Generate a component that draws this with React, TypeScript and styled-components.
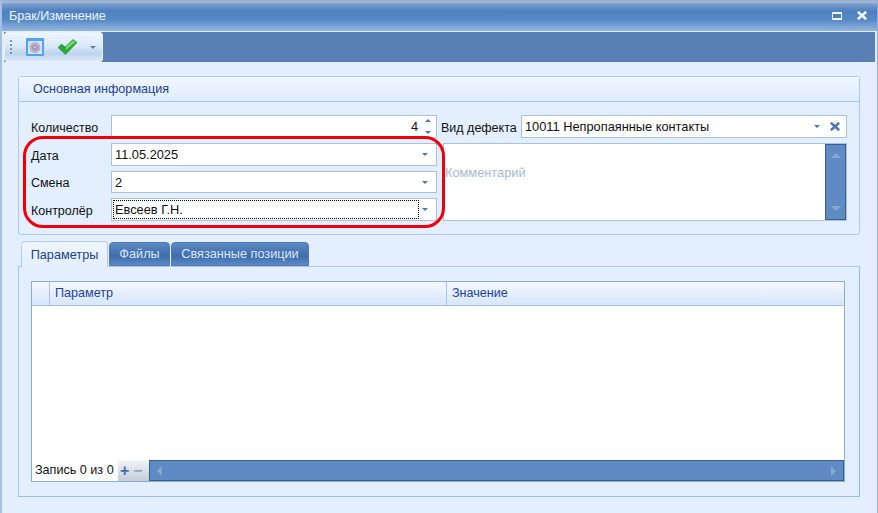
import React, { FunctionComponent } from "react";
import styled, { createGlobalStyle } from "styled-components";

const GlobalStyle = createGlobalStyle`
  html, body {
    margin: 0;
    padding: 0;
    background: #e3eeff;
  }
  * {
    box-sizing: border-box;
  }
`;

const Window = styled.div`
  width: 878px;
  height: 513px;
  display: flex;
  flex-direction: column;
  overflow: hidden;
  background: #e3eeff;
  border-left: 2px solid #a3c0e8;
  border-right: 1px solid #8fb0de;
  font-family: "Liberation Sans", Arial, sans-serif;
  font-size: 12px;
  position: relative;
`;

const TitleBar = styled.div`
  height: 31px;
  margin-left: -2px;
  margin-right: -1px;
  flex: none;
  display: flex;
  align-items: center;
  padding: 0 11px 0 9px;
  color: #eef4fc;
  font-size: 12.6px;
  background: linear-gradient(
    #8ea8c9 0,
    #a9bdd8 2px,
    #7a9dcc 4px,
    #4e80c1 11px,
    #568ac6 20px,
    #8fb2df 30px
  );
`;

const TitleText = styled.div`
  flex: 1;
`;

const TitleButtons = styled.div`
  display: flex;
  align-items: center;
  gap: 15px;
`;

const ToolbarBand = styled.div`
  height: 30px;
  margin: 1px 2px 0 2px;
  flex: none;
  background: #5880b4;
`;

const ToolStrip = styled.div`
  width: 99px;
  height: 30px;
  display: flex;
  align-items: center;
  border-radius: 3px;
  border: 1px solid #e8f1fc;
  background: linear-gradient(#eef5fe 0, #dce9f9 45%, #bcd3ef 75%, #dce9f9 100%);
`;

const Grip = styled.div`
  width: 2px;
  height: 15px;
  margin-left: 5px;
  background: repeating-linear-gradient(#7d97bb 0, #7d97bb 2px, transparent 2px, transparent 4px);
`;

const ToolIcon = styled.div<{ $gap: number }>`
  display: flex;
  margin-left: ${(p) => p.$gap}px;
`;

const OverflowArrow = styled.div`
  margin-left: 13px;
  width: 0;
  height: 0;
  border-left: 3px solid transparent;
  border-right: 3px solid transparent;
  border-top: 3px solid #5d7fae;
`;

const Content = styled.div`
  flex: 1;
  display: flex;
  flex-direction: column;
  padding: 14px 17px 16px 16px;
`;

const GroupPanel = styled.section`
  height: 159px;
  flex: none;
  border: 1px solid #adc8ec;
  border-radius: 3px;
  display: flex;
  flex-direction: column;
`;

const GroupHeader = styled.div`
  height: 25px;
  flex: none;
  display: flex;
  align-items: center;
  padding-left: 14px;
  color: #1f3f8c;
  font-size: 12.6px;
  border-bottom: 1px solid #a9c6ec;
  background: linear-gradient(#f0f6ff, #dfecfd);
`;

const FormGrid = styled.div`
  display: grid;
  grid-template-columns: 80px 326px 6px 78px 326px;
  grid-template-rows: 23px 23px 22px 23px;
  row-gap: 5px;
  padding: 13px 0 0 12px;
`;

const Label = styled.label`
  grid-column: 1;
  display: flex;
  align-items: center;
  padding-top: 2px;
  color: #111;
  font-size: 12.5px;
`;

const SideLabel = styled(Label)`
  grid-column: 4;
  margin-left: -2px;
`;

const Field = styled.div`
  display: flex;
  align-items: center;
  background: #fff;
  border: 1px solid #a8c2e4;
  padding: 0 3px;
  color: #111;
  font-size: 12.8px;
  position: relative;
`;

const FieldValue = styled.div<{ $right?: boolean; $focus?: boolean }>`
  flex: 1;
  height: 100%;
  display: flex;
  align-items: center;
  justify-content: ${(p) => (p.$right ? "flex-end" : "flex-start")};
  padding-right: ${(p) => (p.$right ? "15px" : "0")};
  ${(p) => (p.$focus ? "outline: 1px dotted #000; outline-offset: -2px; margin: 0 2px 0 -3px; padding-left: 3px;" : "")}
`;

const ComboArrow = styled.div`
  width: 0;
  height: 0;
  margin-right: 5px;
  border-left: 3px solid transparent;
  border-right: 3px solid transparent;
  border-top: 3px solid #4a77b3;
`;

const ClearButton = styled.div`
  display: flex;
  margin: 0 3px 0 5px;
`;

const SpinColumn = styled.div`
  position: absolute;
  right: 5px;
  top: 3px;
  bottom: 3px;
  display: flex;
  flex-direction: column;
  justify-content: space-between;
`;

const SpinUp = styled.div`
  width: 0;
  height: 0;
  border-left: 3px solid transparent;
  border-right: 3px solid transparent;
  border-bottom: 3px solid #4a77b3;
`;

const SpinDown = styled.div`
  width: 0;
  height: 0;
  border-left: 3px solid transparent;
  border-right: 3px solid transparent;
  border-top: 3px solid #4a77b3;
`;

const CommentBox = styled.div`
  grid-column: 4 / 6;
  grid-row: 2 / 5;
  display: flex;
  background: #fff;
  border: 1px solid #a8c2e4;
`;

const CommentText = styled.div`
  flex: 1;
  padding: 21px 0 0 1px;
  color: #a8b9cd;
  font-size: 12.8px;
`;

const VScroll = styled.div`
  width: 21px;
  display: flex;
  flex-direction: column;
  align-items: center;
  justify-content: space-between;
  padding: 8px 0;
  background: #5f8ac4;
  border: 1px solid #38608f;
`;

const ArrowUp = styled.div`
  width: 0;
  height: 0;
  border-left: 5px solid transparent;
  border-right: 5px solid transparent;
  border-bottom: 5px solid #86a8d4;
`;

const ArrowDown = styled.div`
  width: 0;
  height: 0;
  border-left: 5px solid transparent;
  border-right: 5px solid transparent;
  border-top: 5px solid #86a8d4;
`;

const ArrowLeft = styled.div`
  width: 0;
  height: 0;
  border-top: 5px solid transparent;
  border-bottom: 5px solid transparent;
  border-right: 5px solid #86a8d4;
`;

const ArrowRight = styled.div`
  width: 0;
  height: 0;
  border-top: 5px solid transparent;
  border-bottom: 5px solid transparent;
  border-left: 5px solid #86a8d4;
`;

const Highlight = styled.div`
  position: absolute;
  left: 21px;
  top: 136px;
  width: 422px;
  height: 92px;
  border: 3px solid #f00008;
  border-radius: 20px;
  pointer-events: none;
`;

const TabRow = styled.div`
  height: 26px;
  margin-top: 5px;
  padding-left: 3px;
  flex: none;
  display: flex;
  align-items: flex-end;
  gap: 1px;
  position: relative;
  z-index: 1;
`;

const Tab = styled.div<{ $active?: boolean; $width: number }>`
  width: ${(p) => p.$width}px;
  height: ${(p) => (p.$active ? "26px" : "24px")};
  margin-bottom: ${(p) => (p.$active ? "-1px" : "0")};
  display: flex;
  align-items: center;
  justify-content: center;
  font-size: 12.7px;
  border-radius: 4px 4px 0 0;
  border: 1px solid ${(p) => (p.$active ? "#b3cdef" : "#4f79b2")};
  border-bottom: ${(p) => (p.$active ? "none" : "1px solid #4f79b2")};
  color: ${(p) => (p.$active ? "#1f3f8c" : "#dbe7f7")};
  background: ${(p) =>
    p.$active
      ? "linear-gradient(#eff6ff, #e3eeff)"
      : "linear-gradient(#5b89c4, #3f6cab 60%, #5c8ac6)"};
`;

const TabPanel = styled.div`
  flex: 1;
  display: flex;
  border: 1px solid #a9c6ec;
  border-right-color: #9dbbe2;
  border-bottom-color: #9dbbe2;
  padding: 14px 14px 14px 12px;
`;

const DataGrid = styled.div`
  flex: 1;
  display: flex;
  flex-direction: column;
  background: #fff;
  border: 1px solid #8eabd2;
`;

const GridHeader = styled.div`
  height: 24px;
  flex: none;
  display: grid;
  grid-template-columns: 18px 397px 1fr;
  border-bottom: 1px solid #a3bfe3;
  background: linear-gradient(#f3f8ff, #d7e6fa);
`;

const HeaderCell = styled.div`
  display: flex;
  align-items: center;
  padding: 0 0 2px 5px;
  color: #1f3f9c;
  font-size: 12.6px;
  border-right: 1px solid #a9c3e6;
  &:last-child {
    border-right: none;
  }
`;

const GridBody = styled.div`
  flex: 1;
`;

const GridFooter = styled.div`
  height: 21px;
  flex: none;
  display: flex;
  align-items: stretch;
`;

const RecordInfo = styled.div`
  width: 86px;
  padding: 3px 0 0 3px;
  color: #111;
  font-size: 12.6px;
  white-space: nowrap;
`;

const PagerButtons = styled.div`
  width: 31px;
  display: flex;
  align-items: center;
  gap: 4px;
  padding-left: 2px;
  background: linear-gradient(#f3f5f8, #c3cbd6);
`;

const PagerSign = styled.span<{ $color: string }>`
  font-family: "Liberation Sans", Arial, sans-serif;
  font-size: 16px;
  font-weight: bold;
  line-height: 16px;
  width: 9px;
  text-align: center;
  color: ${(p) => p.$color};
`;

const HScroll = styled.div`
  flex: 1;
  display: flex;
  align-items: center;
  justify-content: space-between;
  padding: 0 7px;
  background: #5f8ac4;
  border: 1px solid #38608f;
`;

const RestoreIcon = () => (
  <svg width="10" height="8" viewBox="0 0 10 8">
    <rect x="0.5" y="0.5" width="9" height="7" fill="#4f7fbd" stroke="#f4f8fd" />
    <rect x="0" y="0" width="10" height="2" fill="#f4f8fd" />
    <rect x="0" y="6" width="10" height="2" fill="#f4f8fd" />
  </svg>
);

const CloseIcon: FunctionComponent<{ color: string }> = ({ color }) => (
  <svg width="10" height="9" viewBox="0 0 10 9">
    <path d="M0.8 0.8 L9.2 8.2 M9.2 0.8 L0.8 8.2" stroke={color} strokeWidth="2.6" fill="none" />
  </svg>
);

const WindowGearIcon = () => (
  <svg width="18" height="18" viewBox="0 0 18 18">
    <rect x="0" y="0" width="18" height="18" rx="1" fill="#4da6f5" />
    <rect x="2" y="3" width="14" height="13" fill="#d9e2ee" />
    <circle cx="9" cy="9.5" r="5.4" fill="#b4b2c8" />
    <circle cx="9" cy="9.5" r="2.8" fill="#a48fbf" />
    <circle cx="9" cy="9.5" r="1.1" fill="#dcd6e8" />
  </svg>
);

const CheckIcon = () => (
  <svg width="19" height="16" viewBox="0 0 19 16">
    <path d="M0 8.5 L3.5 5 L7 8 L15 0.5 L19 3.5 L7.5 15.5 Z" fill="#2aa83a" stroke="#1f8f30" strokeWidth="0.6" />
    <path d="M8 7.5 L15.2 1.2 L17.4 3 L8 11 Z" fill="#6fdc6a" />
  </svg>
);

const App: FunctionComponent<{}> = () => {
  return (
    <Window>
      <GlobalStyle />
      <TitleBar>
        <TitleText>Брак/Изменение</TitleText>
        <TitleButtons>
          <RestoreIcon />
          <CloseIcon color="#f4f8fd" />
        </TitleButtons>
      </TitleBar>

      <ToolbarBand>
        <ToolStrip>
          <Grip />
          <ToolIcon $gap={14}>
            <WindowGearIcon />
          </ToolIcon>
          <ToolIcon $gap={14}>
            <CheckIcon />
          </ToolIcon>
          <OverflowArrow />
        </ToolStrip>
      </ToolbarBand>

      <Content>
        <GroupPanel>
          <GroupHeader>Основная информация</GroupHeader>
          <FormGrid>
            <Label>Количество</Label>
            <Field>
              <FieldValue $right>4</FieldValue>
              <SpinColumn>
                <SpinUp />
                <SpinDown />
              </SpinColumn>
            </Field>
            <SideLabel>Вид дефекта</SideLabel>
            <Field>
              <FieldValue>10011 Непропаянные контакты</FieldValue>
              <ComboArrow />
              <ClearButton>
                <CloseIcon color="#4a77b3" />
              </ClearButton>
            </Field>

            <Label>Дата</Label>
            <Field>
              <FieldValue>11.05.2025</FieldValue>
              <ComboArrow />
            </Field>
            <CommentBox>
              <CommentText>Комментарий</CommentText>
              <VScroll>
                <ArrowUp />
                <ArrowDown />
              </VScroll>
            </CommentBox>

            <Label>Смена</Label>
            <Field>
              <FieldValue>2</FieldValue>
              <ComboArrow />
            </Field>

            <Label>Контролёр</Label>
            <Field>
              <FieldValue $focus>Евсеев Г.Н.</FieldValue>
              <ComboArrow />
            </Field>
          </FormGrid>
        </GroupPanel>

        <TabRow>
          <Tab $active $width={87}>Параметры</Tab>
          <Tab $width={61}>Файлы</Tab>
          <Tab $width={138}>Связанные позиции</Tab>
        </TabRow>
        <TabPanel>
          <DataGrid>
            <GridHeader>
              <HeaderCell />
              <HeaderCell>Параметр</HeaderCell>
              <HeaderCell>Значение</HeaderCell>
            </GridHeader>
            <GridBody />
            <GridFooter>
              <RecordInfo>Запись 0 из 0</RecordInfo>
              <PagerButtons>
                <PagerSign $color="#3f70ad">+</PagerSign>
                <PagerSign $color="#9aa3ae">−</PagerSign>
              </PagerButtons>
              <HScroll>
                <ArrowLeft />
                <ArrowRight />
              </HScroll>
            </GridFooter>
          </DataGrid>
        </TabPanel>
      </Content>
      <Highlight />
    </Window>
  );
};

export default App;
